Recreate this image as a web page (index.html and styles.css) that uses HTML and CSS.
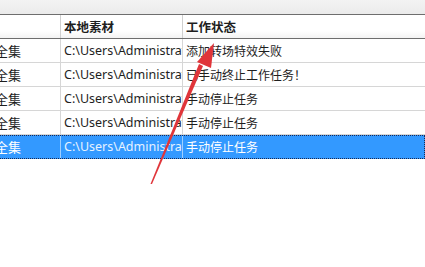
FILE: index.html
```html
<!DOCTYPE html>
<html>
<head>
<meta charset="utf-8">
<link rel="stylesheet" href="styles.css">
</head>
<body>
<div class="top"></div>
<div class="table">
  <div class="row head">
    <div class="cell c1"></div>
    <div class="cell c2">本地素材</div>
    <div class="cell c3">工作状态</div>
  </div>
  <div class="row">
    <div class="cell c1">全集</div>
    <div class="cell c2">C:\Users\Administrator</div>
    <div class="cell c3">添加转场特效失败</div>
  </div>
  <div class="row">
    <div class="cell c1">全集</div>
    <div class="cell c2">C:\Users\Administrator</div>
    <div class="cell c3">已手动终止工作任务！</div>
  </div>
  <div class="row">
    <div class="cell c1">全集</div>
    <div class="cell c2">C:\Users\Administrator</div>
    <div class="cell c3">手动停止任务</div>
  </div>
  <div class="row">
    <div class="cell c1">全集</div>
    <div class="cell c2">C:\Users\Administrator</div>
    <div class="cell c3">手动停止任务</div>
  </div>
  <div class="row sel">
    <div class="cell c1">全集</div>
    <div class="cell c2">C:\Users\Administrator</div>
    <div class="cell c3">手动停止任务</div>
  </div>
</div>
<svg class="arrow" width="425" height="267" viewBox="0 0 425 267">
  <polygon points="150.5,184 152,184 203,66 199,64" fill="#e0353a"/>
  <polygon points="214,43 197,62 211,68" fill="#e0353a"/>
</svg>
</body>
</html>
```
FILE: styles.css
```css
html, body {
  margin: 0;
  padding: 0;
  background: #ffffff;
}
body {
  width: 425px;
  height: 267px;
  overflow: hidden;
  position: relative;
  font-family: "Noto Sans CJK SC", "Noto Sans", sans-serif;
  font-size: 12px;
  color: #1e1e1e;
}
.top {
  height: 14px;
  background: linear-gradient(#f3f3f3, #ebebeb);
}
.table {
  border-top: 1px solid #6e6e6e;
  margin-left: -5px;
}
.row {
  display: grid;
  grid-template-columns: 66px 122px 1fr;
  height: 24px;
  box-sizing: border-box;
  border-bottom: 1px solid #d6d6d6;
}
.row.head {
  border-bottom: 1px solid #6e6e6e;
  background: linear-gradient(#ffffff 0%, #ffffff 70%, #f3f3f3 100%);
  font-weight: bold;
  font-size: 12.5px;
}
.cell {
  box-sizing: border-box;
  border-right: 1px solid #d6d6d6;
  padding-left: 3px;
  white-space: nowrap;
  overflow: hidden;
  line-height: 23px;
}
.head .cell { border-right-color: #d0d0d0; }
.c1 { padding-left: 0; font-size: 13px; }
.c2 { padding-left: 3px; font-family: "Noto Sans", "Noto Sans CJK SC", sans-serif; font-size: 12.5px; }
.head .c2 { font-family: "Noto Sans CJK SC", sans-serif; }
.c3 { border-right: none; }
.row.sel {
  background: #3399ff;
  color: #ffffff;
  outline: 1px dotted #1a2a55;
  outline-offset: -1px;
  border-bottom-color: #3399ff;
}
.row.sel .cell { border-right-color: #9fcfff; }
.row.sel .c2 { color: #e6f2ff; }
.arrow {
  position: absolute;
  left: 0;
  top: 0;
  pointer-events: none;
}
```
